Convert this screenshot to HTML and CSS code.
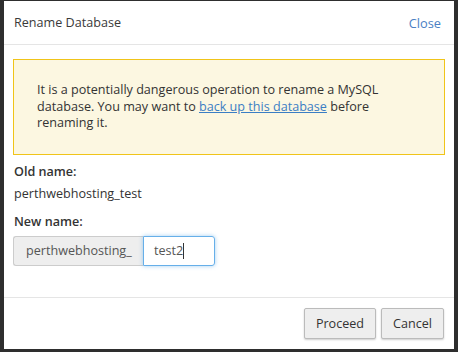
FILE: index.html
```html
<!DOCTYPE html>
<html lang="en">
<head>
  <meta charset="UTF-8">
  <title>Rename Database</title>
  <link rel="stylesheet" href="styles.css">
</head>
<body>

  <div class="modal">
    <!-- Header -->
    <div class="modal-header">
      <span class="modal-title">Rename Database</span>
      <a class="close-link" href="#">Close</a>
    </div>

    <!-- Body -->
    <div class="modal-body">
      <div class="alert">
        It is a potentially dangerous operation to rename a MySQL
        database. You may want to <a href="#">back up this database</a> before
        renaming it.
      </div>

      <div class="field">
        <label>Old name:</label>
        <div class="value">perthwebhosting_test</div>
      </div>

      <div class="field">
        <label>New name:</label>
        <div class="input-group">
          <span class="addon">perthwebhosting_</span>
          <span class="input">test2<span class="caret"></span></span>
        </div>
      </div>
    </div>

    <!-- Footer -->
    <div class="modal-footer">
      <button>Proceed</button>
      <button>Cancel</button>
    </div>
  </div>

</body>
</html>
```

FILE: styles.css
```css
body {
  margin: 0;
  height: 352px;
  background: #2e2e2e;
  font-family: 'Open Sans', sans-serif;
  font-size: 12.6px;
  color: #333;
  overflow: hidden;
}

.modal {
  margin: 1px 4px 0;
  height: 348px;
  background: #ffffff;
  display: flex;
  flex-direction: column;
}

.modal-header {
  height: 43px;
  padding: 0 13px 0 10px;
  border-bottom: 1px solid #e5e5e5;
  display: flex;
  justify-content: space-between;
  align-items: center;
}

.modal-title {
  font-size: 12.6px;
  color: #3a3a3a;
}

.close-link {
  font-size: 12.8px;
  color: #4a80c4;
  text-decoration: none;
}

.modal-body {
  flex: 1;
  padding: 14px 9px 0;
}

.alert {
  background: #fcf7e1;
  border: 1px solid #f0c419;
  padding: 22px 23px 22px;
  line-height: 16.5px;
  color: #333;
}

.alert a {
  color: #3b7ec4;
  text-decoration: underline;
}

.field {
  padding-left: 1px;
  margin-top: 8px;
}

.field label {
  display: block;
  font-weight: 600;
  line-height: 18px;
}

.value {
  margin-top: 4px;
  line-height: 18px;
}

.field + .field {
  margin-top: 10px;
}

.input-group {
  margin-top: 5px;
  display: flex;
  height: 30px;
}

.addon {
  display: flex;
  align-items: center;
  width: 130px;
  box-sizing: border-box;
  padding: 0 12px;
  margin-left: -1px;
  background: #eeeeee;
  border: 1px solid #cccccc;
  border-right: none;
  border-radius: 3px 0 0 3px;
  color: #555;
}

.input {
  display: flex;
  align-items: center;
  width: 72px;
  box-sizing: border-box;
  padding: 0 10px;
  border: 1px solid #66afe9;
  border-radius: 0 3px 3px 0;
  box-shadow: 0 0 4px rgba(102, 175, 233, 0.6);
  color: #555;
}

.caret {
  display: inline-block;
  width: 1px;
  height: 16px;
  background: #333;
}

.modal-footer {
  border-top: 1px solid #e5e5e5;
  height: 51px;
  padding: 0 10px;
  display: flex;
  justify-content: flex-end;
  align-items: center;
  gap: 5px;
}

button {
  height: 31px;
  padding: 0 11px;
  font-family: 'Open Sans', sans-serif;
  font-size: 12.6px;
  color: #333;
  background: #eeeeee;
  border: 1px solid #bbbbbb;
  border-radius: 2px;
  box-shadow: 0 1px 2px rgba(0, 0, 0, 0.2);
}
```
